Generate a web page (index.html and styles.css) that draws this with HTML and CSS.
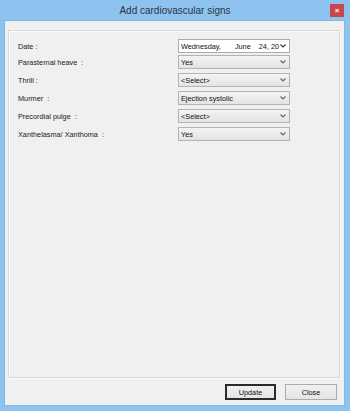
FILE: index.html
```html
<!DOCTYPE html>
<html>
<head>
    <meta charset="UTF-8">
    <title>Add cardiovascular signs</title>
    <link rel="stylesheet" href="styles.css">
</head>
<body>
    <div class="window">
        <div class="titlebar">
            <span class="title">Add cardiovascular signs</span>
            <span class="close">&#215;</span>
        </div>
        <div class="client">
            <div class="panel">
                <div class="row first">
                    <label>Date :</label>
                    <div class="date">
                        <div class="date-text"><span class="d1">Wednesday,</span><span class="d2">June</span><span class="d3">24, 20</span></div>
                        <svg class="arrow" width="6" height="4" viewBox="0 0 6 4"><path d="M0.5 0.5 L3 3 L5.5 0.5" fill="none" stroke="#333" stroke-width="1.1"/></svg>
                    </div>
                </div>
                <div class="row">
                    <label>Parasternal heave &nbsp;:</label>
                    <div class="combo"><span>Yes</span>
                        <svg class="arrow" width="6" height="4" viewBox="0 0 6 4"><path d="M0.5 0.5 L3 3 L5.5 0.5" fill="none" stroke="#666" stroke-width="1.1"/></svg>
                    </div>
                </div>
                <div class="row">
                    <label>Thrill :</label>
                    <div class="combo"><span>&lt;Select&gt;</span>
                        <svg class="arrow" width="6" height="4" viewBox="0 0 6 4"><path d="M0.5 0.5 L3 3 L5.5 0.5" fill="none" stroke="#666" stroke-width="1.1"/></svg>
                    </div>
                </div>
                <div class="row">
                    <label>Murmer &nbsp;:</label>
                    <div class="combo"><span>Ejection systolic</span>
                        <svg class="arrow" width="6" height="4" viewBox="0 0 6 4"><path d="M0.5 0.5 L3 3 L5.5 0.5" fill="none" stroke="#666" stroke-width="1.1"/></svg>
                    </div>
                </div>
                <div class="row">
                    <label>Precordial pulge &nbsp;:</label>
                    <div class="combo"><span>&lt;Select&gt;</span>
                        <svg class="arrow" width="6" height="4" viewBox="0 0 6 4"><path d="M0.5 0.5 L3 3 L5.5 0.5" fill="none" stroke="#666" stroke-width="1.1"/></svg>
                    </div>
                </div>
                <div class="row">
                    <label>Xanthelasma/ Xanthoma &nbsp;:</label>
                    <div class="combo"><span>Yes</span>
                        <svg class="arrow" width="6" height="4" viewBox="0 0 6 4"><path d="M0.5 0.5 L3 3 L5.5 0.5" fill="none" stroke="#666" stroke-width="1.1"/></svg>
                    </div>
                </div>
            </div>
            <div class="buttons">
                <button class="btn default">Update</button>
                <button class="btn">Close</button>
            </div>
            <div class="grip"></div>
        </div>
    </div>
</body>
</html>
```

FILE: styles.css
```css
body {
    margin: 0;
    font-family: "Liberation Sans", Arial, sans-serif;
}
.window {
    width: 350px;
    height: 411px;
    box-sizing: border-box;
    background-color: #8ec3f0;
    display: flex;
    flex-direction: column;
}
.titlebar {
    height: 21px;
    flex-shrink: 0;
    position: relative;
    display: flex;
    align-items: center;
    justify-content: center;
}
.title {
    color: #2b3440;
    font-size: 10px;
}
.close {
    position: absolute;
    right: 6px;
    top: 4px;
    width: 14px;
    height: 13px;
    background-color: #c9464a;
    color: white;
    font-size: 8px;
    font-weight: bold;
    line-height: 13px;
    text-align: center;
}
.client {
    margin: 0 6px 6px 5px;
    flex: 1;
    background-color: #f0f0f0;
    box-shadow: 0 0 0 1px #84b6e2;
    display: flex;
    flex-direction: column;
    position: relative;
}
.panel {
    margin: 9px 4px 0 3px;
    height: 348px;
    flex-shrink: 0;
    box-sizing: border-box;
    border: 1px solid #d9d9d9;
    box-shadow: inset 1px 1px 0 #fbfbfb, 1px 1px 0 #fbfbfb;
    padding: 8px 0 0 9px;
}
.row {
    display: flex;
    align-items: center;
    height: 14px;
    margin-top: 4px;
}
.row.first {
    margin-top: 0;
    margin-bottom: -2px;
}
label {
    width: 160px;
    font-size: 7.3px;
    color: #1a1a1a;
    white-space: nowrap;
}
.combo, .date {
    width: 112px;
    height: 14px;
    box-sizing: border-box;
    border: 1px solid #b3b3b3;
    background: linear-gradient(#f4f4f4, #e3e3e3);
    display: flex;
    align-items: center;
    padding-left: 2px;
    font-size: 7.3px;
    color: #111;
    position: relative;
}
.date {
    background: #fff;
    border-color: #acacac;
}
.date-text {
    white-space: nowrap;
}
.d2 {
    margin-left: 14px;
}
.d3 {
    margin-left: 8px;
}
.arrow {
    position: absolute;
    right: 3px;
    top: 4px;
}
.buttons {
    display: flex;
    justify-content: flex-end;
    gap: 9px;
    margin-top: 6px;
    padding-right: 7px;
}
.btn {
    width: 52px;
    height: 16px;
    box-sizing: border-box;
    border: 1px solid #acacac;
    background: linear-gradient(#f0f0f0, #e5e5e5);
    font-family: "Liberation Sans", Arial, sans-serif;
    font-size: 7.3px;
    color: #111;
    padding: 0;
}
.btn.default {
    border: 2px solid #2b2b2b;
    width: 51px;
}
.grip {
    position: absolute;
    right: 0;
    bottom: 0;
    width: 5px;
    height: 5px;
    background-image: radial-gradient(#9a9a9a 35%, transparent 40%);
    background-size: 2px 2px;
}
```
